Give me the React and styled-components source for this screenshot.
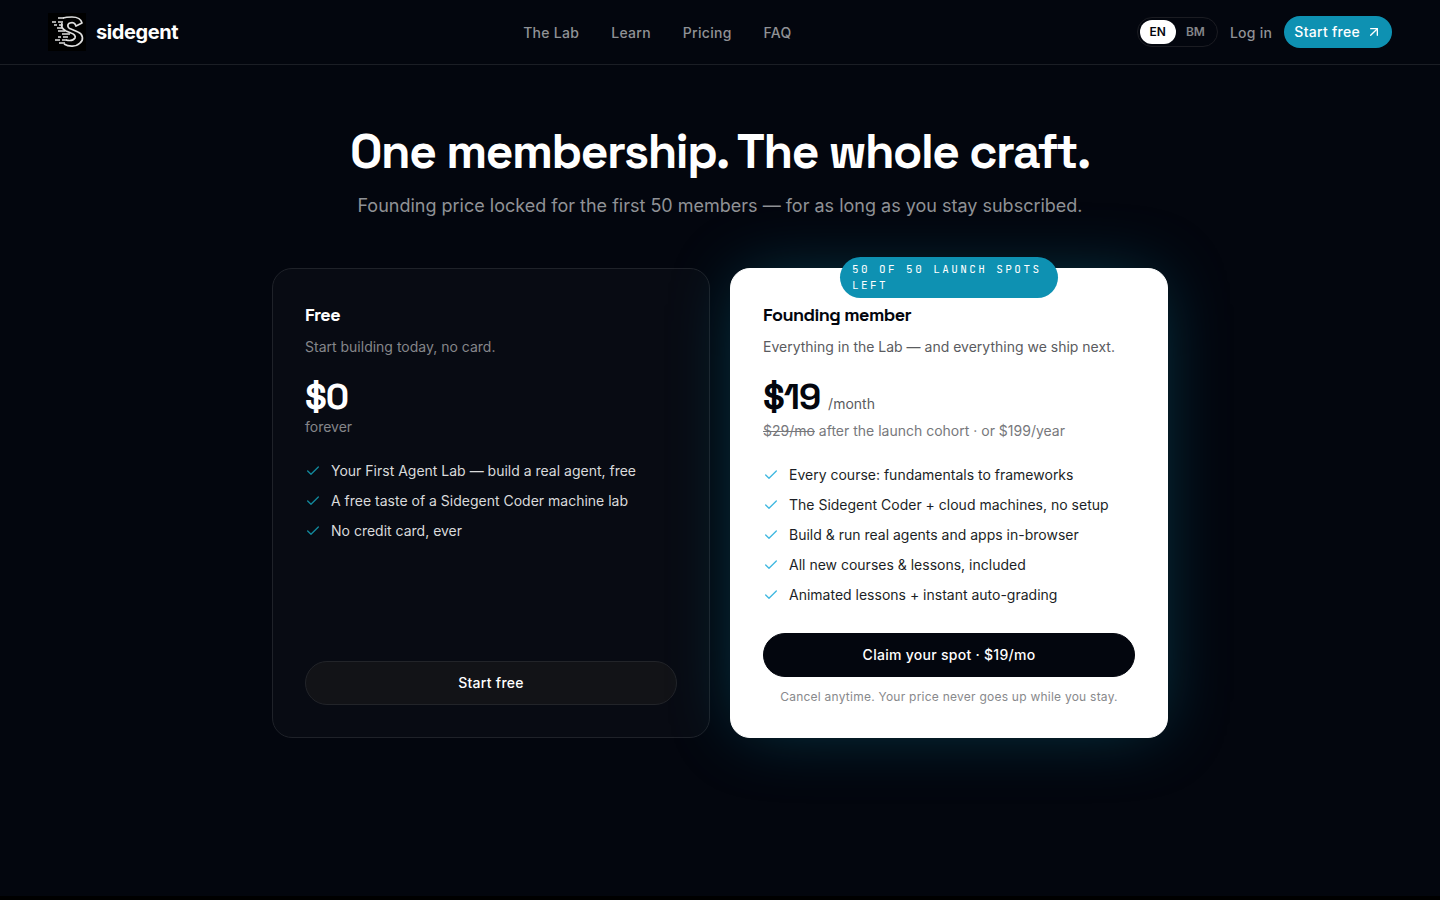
import React, { useState } from 'react';
import styled, { createGlobalStyle, css } from 'styled-components';
import { ArrowUpRight, Check } from 'lucide-react';

const GlobalStyle = createGlobalStyle`
  *, *::before, *::after {
    box-sizing: border-box;
  }

  body {
    margin: 0;
    background: #000;
    color: #fff;
    font-family: Inter, 'Liberation Sans', sans-serif;
    font-size: 14px;
    line-height: 20px;
  }

  h1, h2, p, ul {
    margin: 0;
    padding: 0;
  }

  a {
    color: inherit;
    text-decoration: none;
  }

  button {
    font-family: inherit;
    cursor: pointer;
  }
`;

const display = css`
  font-family: 'Space Grotesk', Inter, sans-serif;
  font-weight: 600;
  letter-spacing: -0.03em;
`;

const Header = styled.header`
  display: flex;
  align-items: center;
  justify-content: space-between;
  height: 65px;
  padding: 0 48px;
  background: #03060e;
  border-bottom: 1px solid #1b1e25;
`;

const Brand = styled.a`
  display: flex;
  align-items: center;
  gap: 10px;
  font-size: 20px;
  font-weight: 700;
  letter-spacing: -0.02em;
`;

const Nav = styled.nav`
  display: flex;
  gap: 32px;
`;

const NavLink = styled.a`
  color: #909296;
  font-weight: 500;
  line-height: 21px;
  letter-spacing: 0.02em;

  &:hover {
    color: #fff;
  }
`;

const Actions = styled.div`
  display: flex;
  align-items: center;
  gap: 12px;
`;

const LangSwitch = styled.div`
  display: flex;
  padding: 2px;
  border: 1px solid #1b1c22;
  border-radius: 999px;
`;

const LangButton = styled.button`
  padding: 4px 10px;
  border: 0;
  border-radius: 999px;
  background: ${(props) => (props.$active ? '#fff' : 'transparent')};
  color: ${(props) => (props.$active ? '#03060e' : '#85868a')};
  font-size: 12px;
  font-weight: 600;
  line-height: 16px;
`;

const StartLink = styled.a`
  display: flex;
  align-items: center;
  gap: 6px;
  height: 32px;
  padding: 0 10px;
  border-radius: 999px;
  background: #0e91b2;
  color: #fff;
  font-weight: 500;
  letter-spacing: 0.02em;
`;

const Main = styled.main`
  padding: 57px 24px 158px;
  background: #03060e;
`;

const Content = styled.section`
  max-width: 896px;
  margin: 0 auto;
`;

const Title = styled.h1`
  ${display}
  font-size: 48px;
  line-height: 60px;
  text-align: center;
`;

const Subtitle = styled.p`
  margin-top: 10px;
  color: #909296;
  font-size: 18px;
  line-height: 28px;
  text-align: center;
`;

const Plans = styled.div`
  display: grid;
  grid-template-columns: repeat(2, minmax(0, 1fr));
  gap: 20px;
  margin-top: 48px;
`;

const Card = styled.article`
  position: relative;
  display: flex;
  flex-direction: column;
  padding: 32px;
  border: 1px solid ${(props) => (props.$featured ? '#fff' : '#1f2229')};
  border-radius: 20px;
  background: ${(props) => (props.$featured ? '#fff' : '#080b13')};
  color: ${(props) => (props.$featured ? '#03060e' : '#fff')};
  box-shadow: ${(props) => (props.$featured ? '0 0 70px -12px rgba(14, 145, 178, 0.4)' : 'none')};
`;

const Badge = styled.span`
  position: absolute;
  top: -12px;
  left: 50%;
  transform: translateX(-50%);
  padding: 4px 12px 5px;
  border-radius: 999px;
  background: #0e91b2;
  color: #fff;
  font-family: 'JetBrains Mono', 'Liberation Mono', monospace;
  font-size: 11px;
  line-height: 16px;
  letter-spacing: 0.22em;
  text-transform: uppercase;
`;

const PlanName = styled.h2`
  ${display}
  font-size: 18px;
  line-height: 28px;
`;

const Muted = styled.p`
  color: ${(props) => (props.$featured ? '#5a5b60' : '#85868a')};
`;

const Tagline = styled(Muted)`
  margin-top: 8px;
`;

const PriceRow = styled.div`
  display: flex;
  align-items: baseline;
  gap: 8px;
  margin-top: 20px;
`;

const Price = styled.span`
  ${display}
  font-size: 36px;
  line-height: 40px;
`;

const Note = styled(Muted)`
  margin-top: ${(props) => (props.$featured ? 4 : 0)}px;
  color: ${(props) => (props.$featured ? '#77787c' : '#85868a')};
`;

const Features = styled.ul`
  display: grid;
  gap: 10px;
  margin: 24px 0 28px;
  color: ${(props) => (props.$featured ? '#1c1f26' : '#d9dadb')};
  list-style: none;
`;

const Feature = styled.li`
  display: flex;
  align-items: center;
  gap: 10px;

  svg {
    color: ${(props) => (props.$featured ? '#3fb8e0' : '#12899c')};
  }
`;

const PlanButton = styled.button`
  width: 100%;
  height: 44px;
  margin-top: auto;
  padding: 0 16px 2px;
  border: 1px solid ${(props) => (props.$featured ? '#03060e' : '#222429')};
  border-radius: 999px;
  background: ${(props) => (props.$featured ? '#03060e' : '#121317')};
  color: #fff;
  font-size: 14px;
  font-weight: 500;
  letter-spacing: 0.02em;
`;

const Footnote = styled.p`
  margin-top: 12px;
  color: #88898c;
  font-size: 12px;
  line-height: 16px;
  text-align: center;
  letter-spacing: 0.02em;
`;

const navItems = ['The Lab', 'Learn', 'Pricing', 'FAQ'];

const plans = [
  {
    name: 'Free',
    tagline: 'Start building today, no card.',
    price: '$0',
    note: 'forever',
    features: [
      'Your First Agent Lab — build a real agent, free',
      'A free taste of a Sidegent Coder machine lab',
      'No credit card, ever',
    ],
    cta: 'Start free',
  },
  {
    featured: true,
    badge: '50 of 50 launch spots left',
    name: 'Founding member',
    tagline: 'Everything in the Lab — and everything we ship next.',
    price: '$19',
    period: '/month',
    oldPrice: '$29/mo',
    note: ' after the launch cohort · or $199/year',
    features: [
      'Every course: fundamentals to frameworks',
      'The Sidegent Coder + cloud machines, no setup',
      'Build & run real agents and apps in-browser',
      'All new courses & lessons, included',
      'Animated lessons + instant auto-grading',
    ],
    cta: 'Claim your spot · $19/mo',
    footnote: 'Cancel anytime. Your price never goes up while you stay.',
  },
];

function Logo() {
  return (
    <svg width="38" height="38" viewBox="0 0 38 38" fill="none" aria-hidden="true">
      <rect width="38" height="38" fill="#000" />
      <path
        d="M15 5C18 4 21 4 24 4C29 4 33 6 34 10L28 13C27 10 25 9 22 10C19 11 19 15 23 16L30 19C35 21 36 27 32 30C28 34 21 34 16 31M18 27C22 28 25 28 27 25C28 23 26 21 23 20L18 18C14 16 13 13 14 10"
        stroke="#dedede"
        strokeWidth="1.7"
        strokeLinejoin="round"
      />
      <path
        d="M10 5H16M4 9H8M10 9H15M6 12H9M11 12H15M9 15H15M10 18H17M14 21H22M10 24H13M15 24H20M7 27H12M14 27H19M11 30H17"
        stroke="#dedede"
        strokeWidth="1.5"
      />
    </svg>
  );
}

function PlanCard({ plan }) {
  const { featured } = plan;

  return (
    <Card $featured={featured}>
      {plan.badge && <Badge>{plan.badge}</Badge>}
      <PlanName>{plan.name}</PlanName>
      <Tagline $featured={featured}>{plan.tagline}</Tagline>
      <PriceRow>
        <Price>{plan.price}</Price>
        {plan.period && <Muted as="span" $featured={featured}>{plan.period}</Muted>}
      </PriceRow>
      <Note $featured={featured}>
        {plan.oldPrice && <s>{plan.oldPrice}</s>}
        {plan.note}
      </Note>
      <Features $featured={featured}>
        {plan.features.map((feature) => (
          <Feature key={feature} $featured={featured}>
            <Check size={16} strokeWidth={2} />
            {feature}
          </Feature>
        ))}
      </Features>
      <PlanButton type="button" $featured={featured}>{plan.cta}</PlanButton>
      {plan.footnote && <Footnote>{plan.footnote}</Footnote>}
    </Card>
  );
}

function App() {
  const [lang, setLang] = useState('EN');

  return (
    <>
      <GlobalStyle />
      <Header>
        <Brand href="#home">
          <Logo />
          sidegent
        </Brand>
        <Nav>
          {navItems.map((item) => (
            <NavLink key={item} href="#">{item}</NavLink>
          ))}
        </Nav>
        <Actions>
          <LangSwitch>
            {['EN', 'BM'].map((code) => (
              <LangButton
                key={code}
                type="button"
                $active={lang === code}
                onClick={() => setLang(code)}
              >
                {code}
              </LangButton>
            ))}
          </LangSwitch>
          <NavLink href="#login">Log in</NavLink>
          <StartLink href="#start">
            Start free
            <ArrowUpRight size={16} strokeWidth={2} />
          </StartLink>
        </Actions>
      </Header>
      <Main>
        <Content>
          <Title>One membership. The whole craft.</Title>
          <Subtitle>
            Founding price locked for the first 50 members — for as long as you stay subscribed.
          </Subtitle>
          <Plans>
            {plans.map((plan) => (
              <PlanCard key={plan.name} plan={plan} />
            ))}
          </Plans>
        </Content>
      </Main>
    </>
  );
}

export default App;
